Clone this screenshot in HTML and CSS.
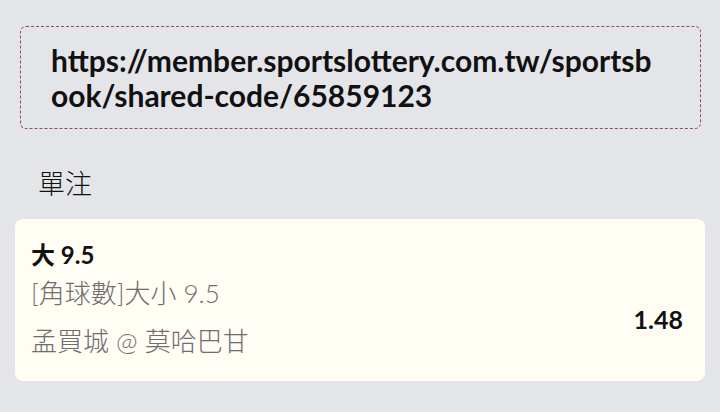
FILE: index.html
```html
<!DOCTYPE html>
<html lang="zh-Hant">
<head>
  <meta charset="UTF-8">
  <meta name="viewport" content="width=device-width, initial-scale=1.0">
  <title>單注分享</title>
  <link rel="stylesheet" href="styles.css">
</head>
<body>
  <div class="share-link">https://member.sportslottery.com.tw/sportsbook/shared-code/65859123</div>

  <div class="section-title">單注</div>

  <div class="bet-card">
    <div class="bet-info">
      <div class="bet-pick">大 9.5</div>
      <div class="bet-market">[角球數]大小 9.5</div>
      <div class="bet-match">孟買城 @ 莫哈巴甘</div>
    </div>
    <div class="bet-odds">1.48</div>
  </div>
</body>
</html>
```

FILE: styles.css
```css
body {
  font-family: Lato, "Noto Sans CJK TC", sans-serif;
  background-color: #e4e5e8;
  color: #111111;
  margin: 0;
  padding: 26px 0 0 0;
}
.share-link {
  margin: 0 19px 0 20px;
  padding: 16px 40px 15px 30px;
  border: 1px dashed #9c4a4a;
  border-radius: 6px;
  font-size: 30px;
  font-weight: bold;
  line-height: 35px;
  word-break: break-all;
}
.section-title {
  margin: 38px 0 0 38px;
  font-size: 27px;
  font-weight: 300;
  line-height: 34px;
}
.bet-card {
  display: flex;
  align-items: center;
  justify-content: space-between;
  margin: 18px 15px 0 15px;
  padding: 20px 22px 22px 16px;
  background-color: #fffdf4;
  border-radius: 8px;
}
.bet-pick {
  font-size: 24px;
  font-weight: bold;
  line-height: 32px;
}
.bet-market,
.bet-match {
  font-size: 26px;
  font-weight: 300;
  color: #6e6e6e;
  line-height: 36px;
}
.bet-market {
  margin-top: 4px;
}
.bet-match {
  margin-top: 12px;
}
.bet-odds {
  font-size: 25px;
  font-weight: bold;
  margin-top: 40px;
}
```
